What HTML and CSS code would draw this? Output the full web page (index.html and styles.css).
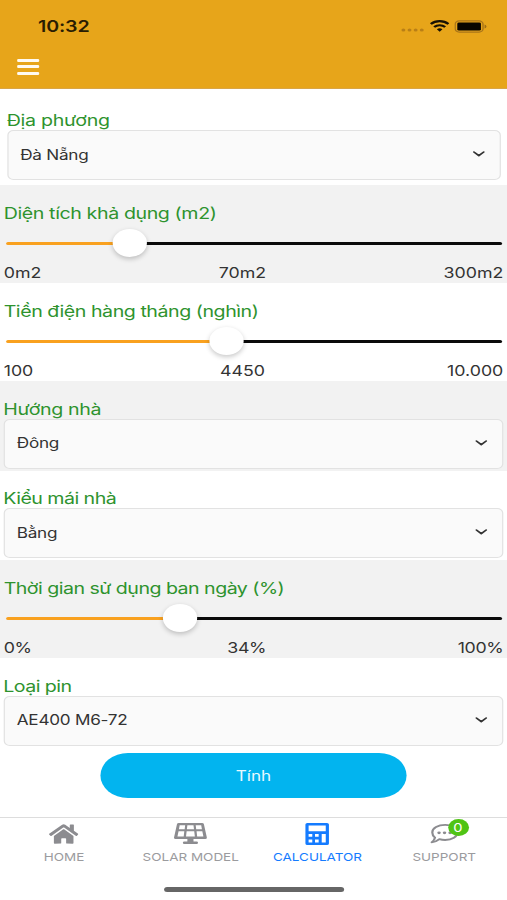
FILE: index.html
```html
<!DOCTYPE html>
<html lang="vi">
<head>
<meta charset="utf-8">
<meta name="viewport" content="width=device-width, initial-scale=1">
<title>Calculator</title>
<link rel="stylesheet" href="styles.css">
</head>
<body>
<div class="app">
  <header class="header">
    <div class="status">
      <span class="time">10:32</span>
      <div class="status-icons">
        <svg width="20" height="6" viewBox="0 0 20 6" fill="#b97f16"><circle cx="2.4" cy="3" r="1.6"/><circle cx="7.4" cy="3" r="1.6"/><circle cx="12.4" cy="3" r="1.6"/><circle cx="17.4" cy="3" r="1.6"/></svg>
        <svg class="wifi" width="16" height="12" viewBox="0 0 16 12" fill="none" stroke="#171104" stroke-width="2.1"><path d="M.8 4.1a10.3 10.3 0 0 1 14.4 0M3.5 7a6.5 6.5 0 0 1 9 0"/><path d="M5.7 9.3a3.4 3.4 0 0 1 4.6 0L8 11.7z" fill="#171104" stroke="none"/></svg>
        <svg width="27" height="13" viewBox="0 0 28 13"><rect x=".7" y=".7" width="23.6" height="11.6" rx="3.4" fill="none" stroke="#a9751a" stroke-width="1.2"/><rect x="2.5" y="2.3" width="20" height="8.4" rx="1.4" fill="#080500"/><path d="M25.6 4.5v4q1.6-.5 1.6-2t-1.6-2" fill="#9d6d16"/></svg>
      </div>
    </div>
    <div class="menu"><i></i><i></i><i></i></div>
  </header>

  <main class="form">
    <section class="field field-first">
      <label class="label l1">Địa phương</label>
      <div class="select"><span>Đà Nẵng</span><svg class="chev" viewBox="0 0 10 6"><path d="M1 1l4 3.7L9 1"/></svg></div>
    </section>

    <section class="field shaded">
      <label class="label l2">Diện tích khả dụng (m2)</label>
      <div class="slider"><div class="fill" style="width:101px"></div><div class="thumb"></div><div class="rest"></div></div>
      <div class="values"><span>0m2</span><span>70m2</span><span>300m2</span></div>
    </section>

    <section class="field">
      <label class="label l3">Tiền điện hàng tháng (nghìn)</label>
      <div class="slider"><div class="fill" style="width:180px"></div><div class="thumb"></div><div class="rest"></div></div>
      <div class="values"><span>100</span><span>4450</span><span>10.000</span></div>
    </section>

    <section class="field shaded">
      <label class="label l4">Hướng nhà</label>
      <div class="select"><span>Đông</span><svg class="chev" viewBox="0 0 10 6"><path d="M1 1l4 3.7L9 1"/></svg></div>
    </section>

    <section class="field">
      <label class="label l5">Kiểu mái nhà</label>
      <div class="select"><span>Bằng</span><svg class="chev" viewBox="0 0 10 6"><path d="M1 1l4 3.7L9 1"/></svg></div>
    </section>

    <section class="field shaded">
      <label class="label l6">Thời gian sử dụng ban ngày (%)</label>
      <div class="slider"><div class="fill" style="width:142px"></div><div class="thumb"></div><div class="rest"></div></div>
      <div class="values percent"><span>0%</span><span>34%</span><span>100%</span></div>
    </section>

    <section class="field">
      <label class="label l7">Loại pin</label>
      <div class="select"><span>AE400 M6-72</span><svg class="chev" viewBox="0 0 10 6"><path d="M1 1l4 3.7L9 1"/></svg></div>
    </section>

    <button class="submit">Tính</button>
  </main>

  <nav class="tabs">
    <a class="tab">
      <svg width="24" height="22" viewBox="0 0 576 512" preserveAspectRatio="none" fill="currentColor"><path d="M280.37 148.26L96 300.11V464a16 16 0 0 0 16 16l112.06-.29a16 16 0 0 0 15.92-16V368a16 16 0 0 1 16-16h64a16 16 0 0 1 16 16v95.64a16 16 0 0 0 16 16.05L464 480a16 16 0 0 0 16-16V300L295.67 148.26a12.19 12.19 0 0 0-15.3 0zM571.6 251.47L488 182.56V44.05a12 12 0 0 0-12-12h-56a12 12 0 0 0-12 12v72.61L318.47 43a48 48 0 0 0-61 0L4.34 251.47a12 12 0 0 0-1.6 16.9l25.5 31A12 12 0 0 0 45.15 301l235.22-193.74a12.19 12.19 0 0 1 15.3 0L530.9 301a12 12 0 0 0 16.9-1.6l25.5-31a12 12 0 0 0-1.7-16.93z"/></svg>
      <span>HOME</span>
    </a>
    <a class="tab">
      <svg width="27" height="22" viewBox="0 0 27 22"><path fill="currentColor" fill-rule="evenodd" d="M4 0h19q1.300 0 1.500 1.300l2.400 13.200q.2 1.500-1.300 1.500H16v2.600h2.500q1.200 0 1.200 1.200t-1.200 1.200h-10q-1.200 0-1.200-1.200t1.200-1.200H11V16H1.400Q-.1 16 .1 14.500L2.500 1.300Q2.700 0 4 0zM4.700 2.200L4.100 6.200H8.800L9.200 2.200zM11 2.200L10.600 6.200h5.800L16 2.200zM17.800 2.200l.4 4h4.700l-.6-4zM3.800 8.200L2.900 13.500H8L8.500 8.200zM10.400 8.200L9.900 13.500h7.200l-.5-5.300zM18.500 8.200l.5 5.300h5.100l-.9-5.300z"/></svg>
      <span>SOLAR MODEL</span>
    </a>
    <a class="tab active">
      <svg width="20" height="22" viewBox="0 0 20 22"><path fill="currentColor" fill-rule="evenodd" d="M2 0h16q1.600 0 1.600 1.600v18.800q0 1.600-1.600 1.600H2Q.4 22 .4 20.400V1.600Q.4 0 2 0zM3 2.500v5.700h14V2.500zM3 11v2.800h3V11zM8.200 11v2.800h3V11zM3 16.400v3h3v-3zM8.200 16.400v3h3v-3zM13.700 11v8.400H17V11z"/></svg>
      <span>CALCULATOR</span>
    </a>
    <a class="tab">
      <svg width="24" height="22" viewBox="0 0 24 22"><path d="M12.500 1.900c5.800 0 10 3.300 10 7.500s-4.200 7.600-10 7.600c-1.700 0-3.300-.3-4.700-.9C6 17.900 3.600 19.200 1.500 19.300c1.500-1.500 2.500-3.200 2.700-4.700C2.800 13.200 2 11.400 2 9.400c0-4.200 4.600-7.500 10.500-7.500z" fill="none" stroke="currentColor" stroke-width="1.800" stroke-linejoin="round"/><g fill="currentColor"><circle cx="7.500" cy="9.800" r="1.400"/><circle cx="12" cy="9.800" r="1.400"/><circle cx="16.500" cy="9.800" r="1.400"/></g></svg>
      <b class="badge">0</b>
      <span>SUPPORT</span>
    </a>
  </nav>
  <div class="home-bar"></div>
</div>
</body>
</html>
```

FILE: styles.css
```css
* { box-sizing: border-box; }
html, body { margin: 0; width: 507px; height: 900px; overflow: hidden; background: #fff; }

/* 414pt-wide phone layout stretched to fill the window width */
.app {
  width: 414px;
  height: 900px;
  display: flex;
  flex-direction: column;
  transform: scaleX(1.22464);
  transform-origin: 0 0;
  font-family: Inter, "Liberation Sans", sans-serif;
  color: #333;
  background: #fff;
}

.header { height: 89px; flex: none; background: #e7a51a; border-bottom: 1px solid #d9a546; }
.status { height: 52px; display: flex; align-items: center; justify-content: space-between; padding: 0 16.500px 0 31px; }
.time { font-size: 16px; font-weight: 600; color: #2a1d02; letter-spacing: -.1px; }
.status-icons { display: flex; align-items: center; gap: 4px; }
.status-icons svg:first-child { margin-top: 7px; }
.menu { width: 18px; margin: 7px 0 0 13.500px; display: flex; flex-direction: column; gap: 3.300px; }
.menu i { height: 3px; border-radius: 1px; background: #fffaf0; }

.form { flex: none; height: 728px; display: flex; flex-direction: column; }
.field { flex: none; padding: 17.500px 2.700px 0; height: 89.700px; }
.field:has(.slider) { height: 98px; padding: 18px 3px 0; }
.field-first { height: 96px; padding: 21px 5.500px 0; }
.shaded { background: #f2f2f2; }
.label { display: block; width: max-content; height: 20px; line-height: 20px; font-size: 16px; color: #2e932e; white-space: nowrap; }
.l1 { letter-spacing: -.22px; }
.l2 { letter-spacing: -.32px; }
.l3 { letter-spacing: -.37px; }
.l4 { letter-spacing: -.28px; }
.l5 { letter-spacing: -.44px; }
.l6 { letter-spacing: -.43px; }
.l7 { letter-spacing: -.45px; }
.select { height: 50px; border: 1px solid #e2e2e2; border-radius: 5px; background: #fafafa; display: flex; align-items: center; justify-content: space-between; padding: 0 12px 2px 10px; font-size: 14px; letter-spacing: -.2px; }
.chev { width: 10px; height: 6px; fill: none; stroke: #333; stroke-width: 1.600; stroke-linecap: round; stroke-linejoin: round; }

.slider { height: 28px; margin: 6px 1px 0 2px; display: flex; align-items: center; }
.fill, .rest { height: 3px; border-radius: 2px; }
.fill { flex: none; background: #f9a11f; }
.rest { flex: 1; background: #0a0a0a; margin-left: -14px; }
.thumb { position: relative; flex: none; width: 28px; height: 28px; margin-left: -14px; border-radius: 50%; background: #fff; box-shadow: 0 2px 5px rgba(0,0,0,.22); }
.values { display: grid; grid-template-columns: 1fr 1fr 1fr; height: 20px; margin-top: 5.500px; line-height: 20px; font-size: 14.500px; }
.values span:nth-child(2) { text-align: center; transform: translateX(-9px); }
.percent span:nth-child(2) { transform: translateX(-5.500px); }
.percent { letter-spacing: -.3px; }
.values span:nth-child(3) { text-align: right; }

.submit { width: 250px; height: 45px; flex: none; align-self: center; margin-top: 5px; border: 0; border-radius: 23px; background: #02b4ef; color: #e9f9ff; font: 14px Inter, sans-serif; }

.tabs { height: 61px; flex: none; display: grid; grid-template-columns: repeat(4, 1fr); border-top: 1px solid #ddd; }
.tab { position: relative; display: flex; flex-direction: column; align-items: center; padding: 5px 0 0 1px; color: #8c8c90; }
.tab span { font-size: 11px; line-height: 14px; margin-top: 5px; letter-spacing: 0; color: #9b9b9e; }
.tab.active, .tab.active span { color: #147bff; }
.badge { position: absolute; left: 55px; top: 1px; width: 17px; height: 17px; border-radius: 50%; background: #4fc414; color: #fff; font-size: 12px; line-height: 17px; font-weight: 400; text-align: center; }
.home-bar { width: 147px; height: 5px; margin: 9px auto 0; border-radius: 3px; background: #666; }
```
